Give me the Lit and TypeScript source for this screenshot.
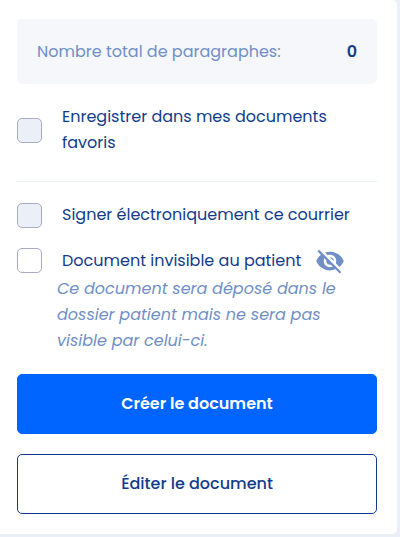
import { LitElement, html, css } from "lit";
import { customElement } from "lit/decorators.js";

@customElement("app-root")
export class AppRoot extends LitElement {
  static styles = css`
    :host {
      display: block;
      min-height: 100vh;
      padding-right: 3px;
      box-sizing: border-box;
      background: #ebeff7;
      color: #133c8b;
      font: 400 16px/26px Poppins, Inter, sans-serif;
    }
    .card {
      padding: 19px 20px 20px 17px;
      background: #fff;
      border-radius: 0 5px 5px 0;
    }
    .total {
      display: flex;
      justify-content: space-between;
      align-items: center;
      height: 65px;
      padding: 0 20px;
      box-sizing: border-box;
      border-radius: 5px;
      background: #f5f7fb;
      color: #708fc6;
    }
    .count {
      color: #133c8b;
      font-weight: 600;
    }
    .option {
      display: flex;
      align-items: center;
      gap: 20px;
      margin-top: 20px;
    }
    .box {
      appearance: none;
      flex: none;
      width: 25px;
      height: 25px;
      margin: 0;
      border: 1px solid #a9abc6;
      border-radius: 5px;
      background: #fff;
    }
    .box:disabled {
      background: #ebeff7;
    }
    .box:checked {
      background: #0065ff;
    }
    .divider {
      height: 1px;
      margin: 25px 0 0;
      border: 0;
      background: #ebeff7;
    }
    .hidden-option {
      height: 25px;
    }
    .with-icon {
      display: flex;
      align-items: center;
      gap: 14px;
    }
    .eye {
      flex: none;
      width: 30px;
      height: 30px;
      fill: #708fc6;
    }
    .note {
      margin: 3px 20px 0 40px;
      color: #708fc6;
      font-style: italic;
    }
    .button {
      display: block;
      width: 100%;
      height: 60px;
      margin-top: 20px;
      border: 1px solid #133c8b;
      border-radius: 5px;
      background: #fff;
      color: #133c8b;
      font: 500 16px/26px Poppins, Inter, sans-serif;
      cursor: pointer;
    }
    .primary {
      border-color: #0065ff;
      background: #0065ff;
      color: #fff;
      font-weight: 600;
    }
  `;

  render() {
    return html`
      <main class="card">
        <div class="total">
          <span>Nombre total de paragraphes:</span>
          <span class="count">0</span>
        </div>
        <div class="option">
          <input class="box" type="checkbox" id="favorite" disabled />
          <label for="favorite">Enregistrer dans mes documents favoris</label>
        </div>
        <hr class="divider" />
        <div class="option">
          <input class="box" type="checkbox" id="sign" disabled />
          <label for="sign">Signer électroniquement ce courrier</label>
        </div>
        <div class="option hidden-option">
          <input class="box" type="checkbox" id="invisible" aria-describedby="note" />
          <label class="with-icon" for="invisible">
            Document invisible au patient
            <svg class="eye" viewBox="0 0 24 24" aria-hidden="true">
              <path
                d="M12 7c2.76 0 5 2.24 5 5 0 .65-.13 1.26-.36 1.83l2.92 2.92c1.51-1.26 2.7-2.89 3.43-4.75-1.73-4.39-6-7.5-11-7.5-1.4 0-2.74.25-3.98.7l2.16 2.16C10.74 7.13 11.35 7 12 7zM2 4.27l2.28 2.28.46.46C3.08 8.3 1.78 10.02 1 12c1.73 4.39 6 7.5 11 7.5 1.55 0 3.03-.3 4.38-.84l.42.42L19.73 22 21 20.73 3.27 3 2 4.27zM7.53 9.8l1.55 1.55c-.05.21-.08.43-.08.65 0 1.66 1.34 3 3 3 .22 0 .44-.03.65-.08l1.55 1.55c-.67.33-1.41.53-2.2.53-2.76 0-5-2.24-5-5 0-.79.2-1.53.53-2.2zm4.31-.78l3.15 3.15.02-.16c0-1.66-1.34-3-3-3l-.17.01z"
              />
            </svg>
          </label>
        </div>
        <p class="note" id="note">
          Ce document sera déposé dans le dossier patient mais ne sera pas visible par celui-ci.
        </p>
        <button class="button primary" type="button">Créer le document</button>
        <button class="button" type="button">Éditer le document</button>
      </main>
    `;
  }
}
